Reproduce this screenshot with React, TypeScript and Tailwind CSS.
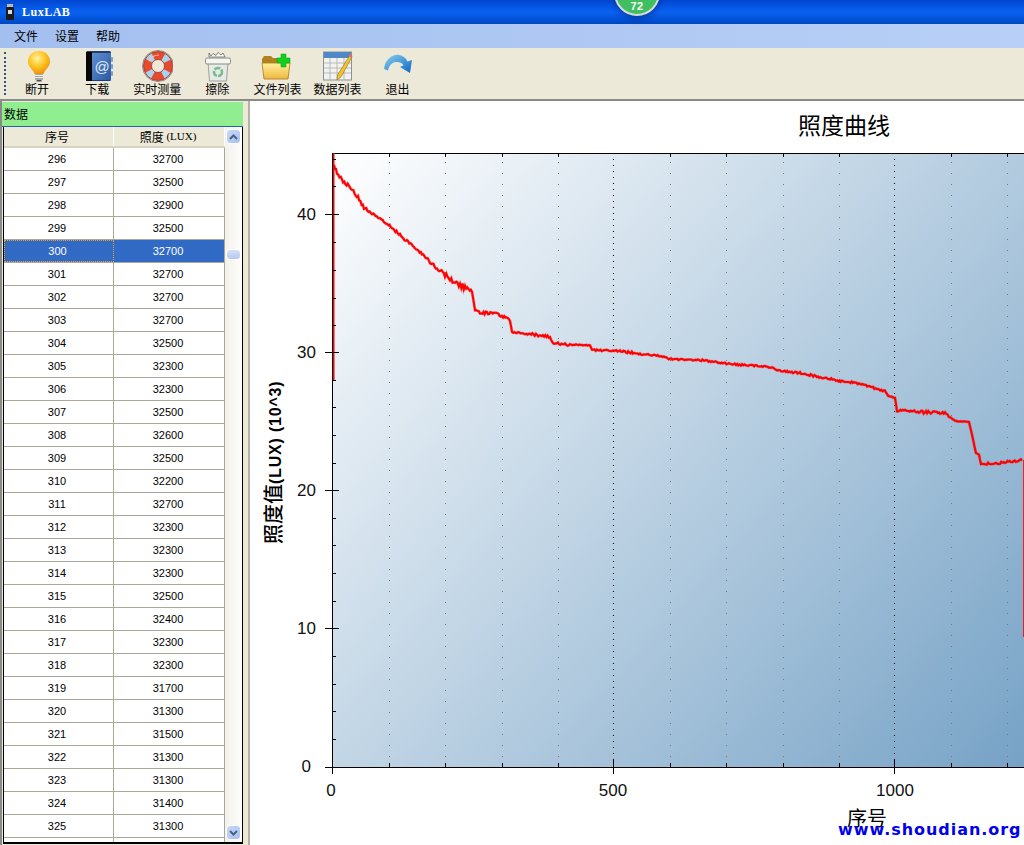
const rows: [number, number][] = [
  [296, 32700], [297, 32500], [298, 32900], [299, 32500], [300, 32700], [301, 32700],
  [302, 32700], [303, 32700], [304, 32500], [305, 32300], [306, 32300], [307, 32500],
  [308, 32600], [309, 32500], [310, 32200], [311, 32700], [312, 32300], [313, 32300],
  [314, 32300], [315, 32500], [316, 32400], [317, 32300], [318, 32300], [319, 31700],
  [320, 31300], [321, 31500], [322, 31300], [323, 31300], [324, 31400], [325, 31300],
];

const curve: [number, number, number][] = [
  [334, 165, 1], [337, 172, 1.2], [342, 180, 1], [350, 187, 1], [358, 197, 1.2], [364, 208, 1],
  [372, 213, 1], [385, 222, 1], [400, 235, 1], [415, 248, 1], [430, 262, 1.2], [445, 275, 1.2],
  [455, 283, 2.2], [465, 287, 2.2], [472, 291, 0.8], [475, 310, 0.3], [480, 313, 0.8], [495, 313, 1],
  [510, 320, 0.8], [512, 332, 0.3], [530, 334, 0.7], [550, 337, 0.8], [553, 343, 0.5], [570, 345, 0.7],
  [590, 345, 0.4], [592, 350, 0.4], [620, 351, 0.5], [640, 354, 0.7], [660, 356, 0.5], [670, 359, 0.5],
  [700, 360, 0.5], [730, 364, 0.6], [770, 367, 0.6], [780, 371, 0.6], [800, 373, 0.6], [830, 379, 0.7],
  [860, 384, 0.7], [885, 391, 0.6], [888, 396, 0.5], [895, 398, 0.4], [897, 411, 0.5], [905, 410, 0.7],
  [920, 412, 0.7], [945, 413, 1], [950, 417, 0.7], [955, 421, 0.2], [969, 422, 0.2], [972, 435, 0.3],
  [976, 453, 0.4], [979, 455, 0.2], [981, 464, 0.4], [1000, 463, 0.7], [1022, 460, 0.7],
];

// stepped noise so the trace looks like sampled data
const curvePath = () => {
  let d = "M334 165";
  for (let i = 1; i < curve.length; i++) {
    const [x0, y0] = curve[i - 1];
    const [x1, y1, j] = curve[i];
    const n = Math.max(1, Math.round((x1 - x0) / 1.2));
    for (let k = 1; k <= n; k++) {
      const x = x0 + ((x1 - x0) * k) / n;
      const y = y0 + ((y1 - y0) * k) / n;
      const noise = Math.sin(x * 12.9898) * 43758.5453;
      const r = noise - Math.floor(noise) - 0.5;
      d += `L${x.toFixed(1)} ${(y + r * j * 3).toFixed(1)}`;
    }
  }
  return d;
};

const minorX = [389, 445, 502, 558, 670, 726, 783, 839, 951, 1007];
const minorY = [159, 186, 242, 270, 298, 325, 380, 407, 435, 463, 518, 545, 573, 601, 656, 684, 711, 739];

const Chart = () => (
  <svg viewBox="250 101 774 744" className="block h-full w-full">
    <defs>
      <linearGradient id="plot" gradientUnits="userSpaceOnUse" x1="333" y1="153" x2="1024" y2="767">
        <stop offset="0" stopColor="#ffffff" />
        <stop offset="1" stopColor="#76a2c6" />
      </linearGradient>
    </defs>
    <text x="844" y="134" textAnchor="middle" fontSize="23" fontFamily="'Noto Sans CJK SC', sans-serif">照度曲线</text>
    <rect x="333" y="153" width="700" height="614" fill="url(#plot)" />
    {minorX.map((x) => (
      <g key={x}>
        <line x1={x + 0.5} x2={x + 0.5} y1="162" y2="764" stroke="#777" strokeWidth="1" strokeDasharray="1 10" />
        <line x1={x + 0.5} x2={x + 0.5} y1="153" y2="157" stroke="#000" />
        <line x1={x + 0.5} x2={x + 0.5} y1="763" y2="767" stroke="#000" />
      </g>
    ))}
    {[614, 895].map((x) => (
      <g key={x}>
        <line x1={x - 0.5} x2={x - 0.5} y1="153" y2="767" stroke="#000" strokeWidth="1" strokeDasharray="1 5" />
        <line x1={x - 0.5} x2={x - 0.5} y1="760" y2="774" stroke="#000" />
      </g>
    ))}
    <path d={curvePath()} fill="none" stroke="#ff0000" strokeOpacity="0.35" strokeWidth="3" />
    <path d={curvePath()} fill="none" stroke="#ff0000" strokeWidth="2" />
    <line x1="1023.5" x2="1023.5" y1="460" y2="637" stroke="#ff0000" strokeOpacity="0.8" strokeWidth="1" />
    <line x1="333" x2="1024" y1="153.5" y2="153.5" stroke="#000" />
    <line x1="333" x2="1024" y1="767.5" y2="767.5" stroke="#000" />
    <line x1="332.5" x2="332.5" y1="153" y2="767" stroke="#000" strokeWidth="1" />
    <line x1="333.75" x2="333.75" y1="153" y2="380" stroke="#ff0000" strokeWidth="1.5" />
    <line x1="332.5" x2="332.5" y1="760" y2="774" stroke="#000" />
    {minorY.map((y) => (
      <line key={y} x1="333" x2="336" y1={y + 0.5} y2={y + 0.5} stroke="#000" />
    ))}
    {[214, 352, 490, 628, 767].map((y) => (
      <line key={y} x1="325" x2="339" y1={y + 0.5} y2={y + 0.5} stroke="#000" />
    ))}
    <g fontSize="17" fontFamily="'Liberation Sans', sans-serif" fill="#111">
      <text x="316" y="220" textAnchor="end">40</text>
      <text x="316" y="358" textAnchor="end">30</text>
      <text x="316" y="496" textAnchor="end">20</text>
      <text x="316" y="634" textAnchor="end">10</text>
      <text x="311" y="772" textAnchor="end">0</text>
      <text x="331" y="796" textAnchor="middle">0</text>
      <text x="613" y="796" textAnchor="middle">500</text>
      <text x="895" y="796" textAnchor="middle">1000</text>
    </g>
    <text transform="translate(281 544) rotate(-90)" fontWeight="700">
      <tspan fontSize="20" fontWeight="500" fontFamily="'Noto Sans CJK SC', sans-serif">照度值</tspan>
      <tspan fontSize="16" letterSpacing="0.8" fontFamily="'Liberation Sans', sans-serif">(LUX) (10^3)</tspan>
    </text>
    <text x="867" y="826" textAnchor="middle" fontSize="20" fontFamily="'Noto Sans CJK SC', sans-serif">序号</text>
  </svg>
);

const BulbIcon = () => (
  <svg viewBox="0 0 32 32" className="h-8 w-8">
    <defs>
      <radialGradient id="bulb" cx="0.42" cy="0.32" r="0.7">
        <stop offset="0" stopColor="#fff2a0" />
        <stop offset="0.55" stopColor="#fdc21f" />
        <stop offset="1" stopColor="#ee8f0c" />
      </radialGradient>
    </defs>
    <path d="M18 1C11.500 1 7 5.800 7 11.500c0 4.500 3 6.500 5 9.500.8 1.200 1.500 2 1.500 3h9c0-1 .7-1.800 1.500-3 2-3 5-5 5-9.500C29 5.800 24.500 1 18 1z" fill="url(#bulb)" />
    <rect x="14" y="24" width="8" height="6" rx="1" fill="#a8a8a2" />
    <path d="M14 25.500h8M14 27.500h8" stroke="#eeeeea" strokeWidth="1" />
    <rect x="15.500" y="30" width="5" height="1.500" fill="#4d4d47" />
  </svg>
);

const BookIcon = () => (
  <svg viewBox="0 0 32 32" className="h-8 w-8">
    <defs>
      <linearGradient id="book" x1="0" y1="0" x2="1" y2="1">
        <stop offset="0" stopColor="#5f8ed2" />
        <stop offset="1" stopColor="#2a5aa0" />
      </linearGradient>
    </defs>
    <rect x="5" y="1" width="25" height="30" rx="1.500" fill="#1d3f78" />
    <rect x="5" y="2" width="6" height="29" fill="#070707" />
    <rect x="11" y="3" width="19" height="27" fill="url(#book)" />
    <rect x="30" y="7" width="2" height="5" rx="1" fill="#7f9dc9" />
    <rect x="30" y="14" width="2" height="5" rx="1" fill="#7f9dc9" />
    <rect x="30" y="21" width="2" height="5" rx="1" fill="#7f9dc9" />
    <text x="21" y="21.500" textAnchor="middle" fontSize="15" fill="#dbe6f6" fontFamily="'Liberation Sans', sans-serif">@</text>
  </svg>
);

const BuoyIcon = () => (
  <svg viewBox="0 0 32 32" className="h-8 w-8">
    <circle cx="17" cy="16" r="15.500" fill="none" stroke="#8a8a84" strokeWidth="1" />
    <circle cx="17" cy="16" r="10.500" fill="none" stroke="#e5492e" strokeWidth="8" />
    <circle cx="17" cy="16" r="10.500" fill="none" stroke="#a9d2ee" strokeWidth="8" strokeDasharray="6 10.490" strokeDashoffset="-5.250" />
    <circle cx="17" cy="16" r="14.500" fill="none" stroke="#a5352a" strokeWidth="0.800" />
    <circle cx="17" cy="16" r="6.500" fill="none" stroke="#a5352a" strokeWidth="0.800" />
    <path d="M8 11c2-4 6-6 10-6" fill="none" stroke="#ffc0b0" strokeWidth="1.200" />
  </svg>
);

const BinIcon = () => (
  <svg viewBox="0 0 32 32" className="h-8 w-8">
    <path d="M7 12h20l-1.500 19h-17z" fill="#e6eae4" stroke="#a0a29c" strokeWidth="1" />
    <path d="M8 3l2 3 2-2.500 3 2 2-3 3 2.500 2-2 2 4H8z" fill="#fff" stroke="#55564f" strokeWidth="0.700" />
    <rect x="4.500" y="8" width="25" height="6" rx="1.500" fill="#f5f5f1" stroke="#8a8b85" strokeWidth="1" />
    <circle cx="17" cy="22" r="4" fill="none" stroke="#7ab98c" strokeWidth="2.500" strokeDasharray="6 1.300" />
  </svg>
);

const FolderIcon = () => (
  <svg viewBox="0 0 32 32" className="h-8 w-8">
    <defs>
      <linearGradient id="folder" x1="0" y1="0" x2="0" y2="1">
        <stop offset="0" stopColor="#fff0a0" />
        <stop offset="1" stopColor="#f0b73c" />
      </linearGradient>
    </defs>
    <path d="M1 9l2-3h7l2 2h12v6H1z" fill="#b38220" />
    <path d="M1 13h28l-2 16H3z" fill="url(#folder)" stroke="#a87a1c" strokeWidth="0.800" />
    <path d="M20 4h5v4h4v5h-4v4h-5v-4h-4V8h4z" fill="#12d01e" stroke="#0a9a16" strokeWidth="0.500" />
  </svg>
);

const TableIcon = () => (
  <svg viewBox="0 0 32 32" className="h-8 w-8">
    <rect x="1.500" y="2" width="28" height="28" fill="#f2f2ee" stroke="#8c9097" strokeWidth="1" />
    <rect x="2" y="2" width="27" height="6" fill="#4f88c6" />
    <path d="M2 13h27M2 18h27M2 23h27M8 8v22M15 8v22M22 8v22" stroke="#a9adb3" strokeWidth="0.800" />
    <path d="M28 5l2 2-11 20-4 3 .5-5z" fill="#f2c230" stroke="#8a6d14" strokeWidth="0.600" />
    <path d="M28 3.500l2.500 2.500-1 2-2.500-2z" fill="#ec6a6f" />
  </svg>
);

const RedoIcon = () => (
  <svg viewBox="0 0 32 32" className="h-8 w-8">
    <defs>
      <linearGradient id="redo" x1="0" y1="0" x2="1" y2="1">
        <stop offset="0" stopColor="#8ad0f2" />
        <stop offset="1" stopColor="#0b66c2" />
      </linearGradient>
    </defs>
    <path d="M2 19C3 9 11 4 17 5c4 .6 7 3 8.500 6.500L30 10l-2 13-10-6 3.500-1.800C19.500 12.500 17 11.500 14 12c-4 .5-7 3.500-8 8.500z" fill="url(#redo)" />
  </svg>
);

const tools = [
  { label: "断开", icon: <BulbIcon /> },
  { label: "下载", icon: <BookIcon /> },
  { label: "实时测量", icon: <BuoyIcon /> },
  { label: "擦除", icon: <BinIcon /> },
  { label: "文件列表", icon: <FolderIcon /> },
  { label: "数据列表", icon: <TableIcon /> },
  { label: "退出", icon: <RedoIcon /> },
];

const cjk = "font-['Noto_Sans_CJK_SC',sans-serif]";

const App = () => {
  return (
    <div className={`relative flex h-[845px] w-[1024px] flex-col overflow-hidden bg-[#ece9d8] text-xs text-black ${cjk}`}>
      {/* title bar */}
      <div className="flex h-6 shrink-0 items-center gap-[7px] bg-gradient-to-b from-[#0046d0] via-[#0a62f2] to-[#0047c4] pl-[5px]">
        <svg viewBox="0 0 10 16" className="h-4 w-[10px]">
          <rect x="2" y="0" width="6" height="3" fill="#bbb" />
          <rect x="1" y="3" width="8" height="13" rx="1" fill="#1b1b1b" />
          <rect x="3" y="6" width="4" height="4" fill="#ddd" />
        </svg>
        <span className="font-['Liberation_Serif',serif] text-xs font-bold tracking-[0.5px] text-white">LuxLAB</span>
      </div>

      {/* menu */}
      <div className="flex h-6 shrink-0 items-center gap-[17px] bg-gradient-to-r from-[#a3bfef] to-[#b8d0f7] pl-[14px] leading-none">
        <span>文件</span>
        <span>设置</span>
        <span>帮助</span>
      </div>

      {/* toolbar */}
      <div className="flex h-[53px] shrink-0 border-b-2 border-[#8a8a86] bg-[#ece9d8]">
        <div className="mt-1 ml-1 h-[43px] w-0 border-l-2 border-dotted border-[#3a4f7a]" />
        <div className="ml-[1px] flex">
          {tools.map((t) => (
            <div key={t.label} className="flex w-[60.100px] flex-col items-center pt-[2px]">
              {t.icon}
              <span className="-mt-[1px] leading-[16px] whitespace-nowrap">{t.label}</span>
            </div>
          ))}
        </div>
      </div>

      <div className="flex min-h-0 flex-1">
        {/* data panel */}
        <div className="flex w-[243px] shrink-0 flex-col border-l-2 border-[#8a8a86] pt-[1px]">
          <div className="flex h-[25px] shrink-0 items-center border-b border-[#2a5fb0] bg-[#90ee90] pl-[2px] leading-none">数据</div>
          <div className="ml-[1px] flex h-[717px] min-h-0 border-x border-b-2 border-black bg-white">
            <div className="min-w-0 flex-1 overflow-hidden">
              <div className="flex h-[21px] border-b-2 border-[#d8d4c2] bg-[#ece9d8]">
                <div className="flex w-[110px] items-center justify-center border-r border-white pr-[3px]">序号</div>
                <div className="flex w-[111px] items-center justify-center border-r border-white pr-[2px] font-['Liberation_Serif',serif] text-[11px]">
                  <span className={cjk + " text-xs"}>照度</span>&nbsp;(LUX)
                </div>
              </div>
              {rows.map(([id, lux]) => {
                const selected = id === 300;
                return (
                  <div
                    key={id}
                    className={`flex h-[23px] border-b border-[#aca899] font-['Liberation_Sans',sans-serif] text-[11px] ${selected ? "bg-[#316ac5] text-white" : ""}`}
                  >
                    <div className={`flex w-[110px] items-center justify-center pr-[3px] ${selected ? "border border-dotted border-[#f0a030]" : "border-r border-[#aca899]"}`}>{id}</div>
                    <div className="flex w-[111px] items-center justify-center border-r border-[#aca899] pr-[2px]">{lux}</div>
                  </div>
                );
              })}
              <div className="flex h-6">
                <div className="w-[110px] border-r border-[#aca899]" />
                <div className="w-[111px] border-r border-[#aca899]" />
              </div>
            </div>
            {/* scrollbar */}
            <div className="relative flex w-[17px] shrink-0 flex-col items-center justify-between bg-gradient-to-r from-[#f3f1ec] to-[#fefefb] py-[2px]">
              <div className="flex h-[15px] w-[15px] items-center justify-center rounded-sm border border-white bg-gradient-to-br from-[#c8d8f8] to-[#a8c0f0]">
                <svg viewBox="0 0 9 6" className="h-[6px] w-[9px]"><path d="M1 5l3.500-3.500L8 5" fill="none" stroke="#4d6185" strokeWidth="2" /></svg>
              </div>
              <div className="absolute top-[122px] left-[1px] h-[11px] w-[15px] rounded-sm border border-white bg-gradient-to-b from-[#d5e0f8] to-[#b5c8f0]" />
              <div className="flex h-[15px] w-[15px] items-center justify-center rounded-sm border border-white bg-gradient-to-br from-[#c8d8f8] to-[#a8c0f0]">
                <svg viewBox="0 0 9 6" className="h-[6px] w-[9px]"><path d="M1 1l3.500 3.500L8 1" fill="none" stroke="#4d6185" strokeWidth="2" /></svg>
              </div>
            </div>
          </div>
        </div>

        {/* splitter */}
        <div className="w-[7px] shrink-0 border-r-2 border-[#b5b2a2] bg-[#ece9d8]" />

        {/* chart */}
        <div className="min-w-0 flex-1 bg-white">
          <Chart />
        </div>
      </div>

      {/* floating badge */}
      <div className="absolute top-[-32px] left-[614px] flex h-[48px] w-[46px] items-end justify-center rounded-full border-2 border-[#d8dcd8] bg-[#3fbf5f] pb-[2px] font-['Liberation_Sans',sans-serif] text-[11px] leading-[11px] font-bold tracking-[0.5px] text-white shadow-[0_3px_6px_rgba(0,0,60,0.3)]">
        72
      </div>

      {/* watermark */}
      <div className="absolute top-[821px] left-[838px] font-['DejaVu_Sans',sans-serif] text-base leading-[18px] font-bold tracking-[0.95px] whitespace-nowrap text-[#0000ee]">
        www.shoudian.org
      </div>
    </div>
  );
};

export default App;
